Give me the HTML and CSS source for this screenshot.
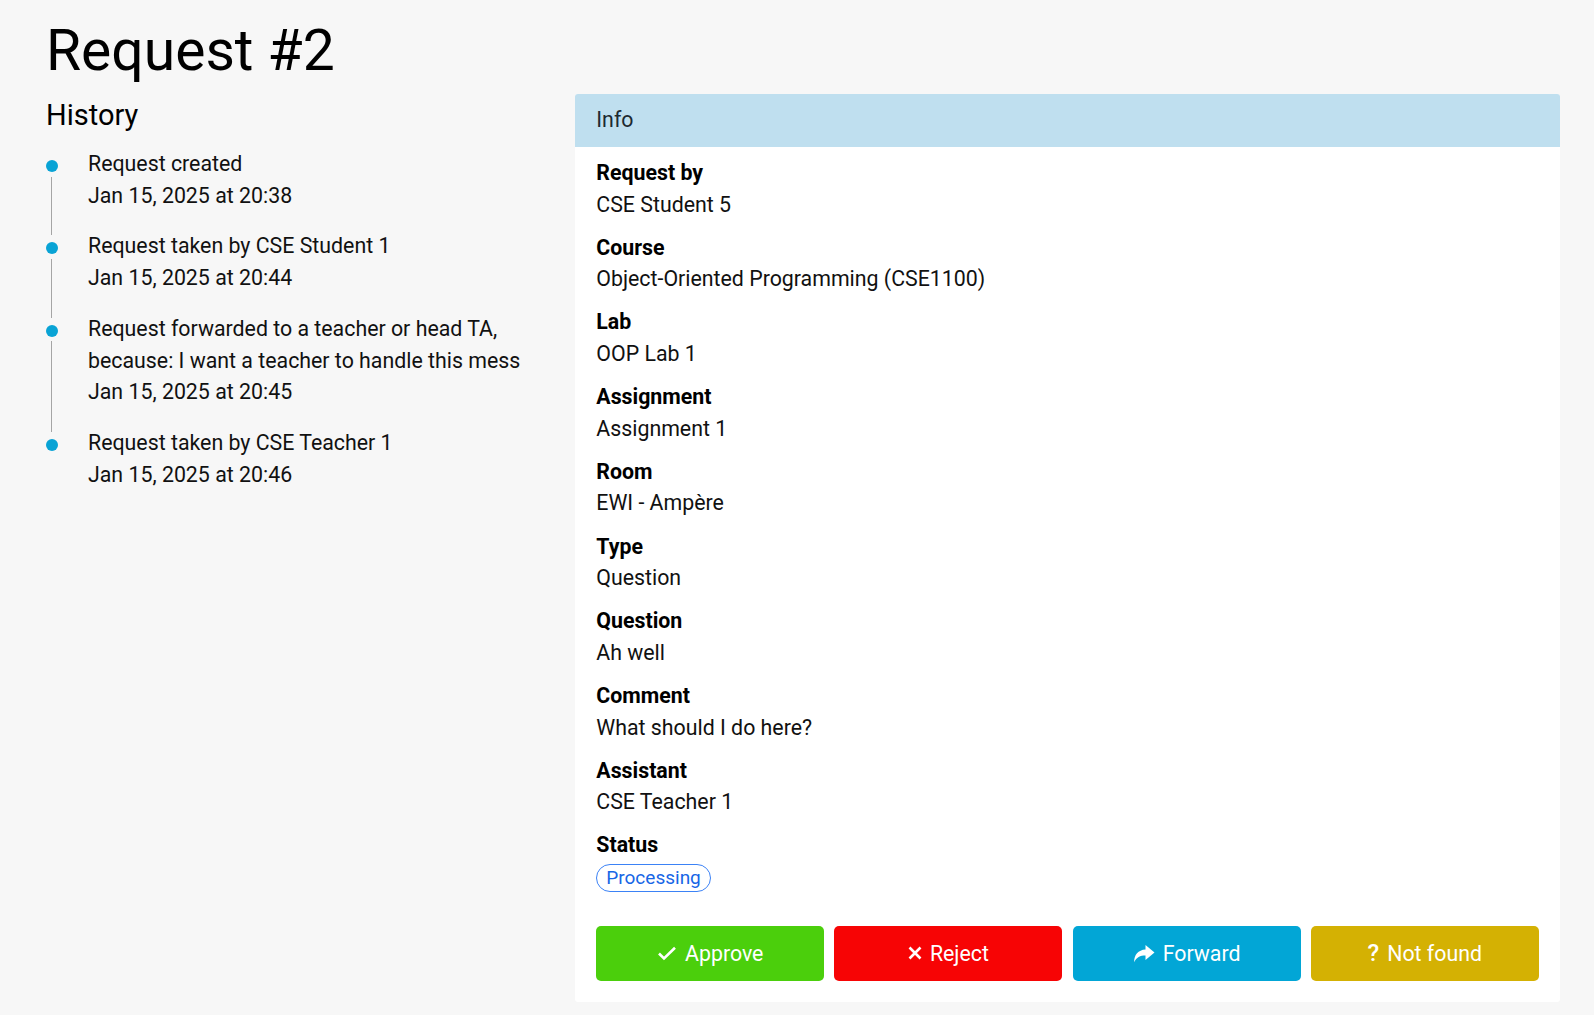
FILE: index.html
```html
<!DOCTYPE html>
<html lang="en">
<head>
  <meta charset="UTF-8">
  <meta name="viewport" content="width=device-width, initial-scale=1.0">
  <title>Request #2</title>
  <link rel="stylesheet" href="styles.css">
</head>
<body>

  <div class="page">
    <h1 class="page-title">Request #2</h1>

    <div class="layout">
      <!-- History timeline -->
      <div class="history">
        <h2 class="history-title">History</h2>
        <ul class="timeline">
          <li class="timeline-item">
            <div>Request created</div>
            <div>Jan 15, 2025 at 20:38</div>
          </li>
          <li class="timeline-item">
            <div>Request taken by CSE Student 1</div>
            <div>Jan 15, 2025 at 20:44</div>
          </li>
          <li class="timeline-item">
            <div>Request forwarded to a teacher or head TA,<br>because: I want a teacher to handle this mess</div>
            <div>Jan 15, 2025 at 20:45</div>
          </li>
          <li class="timeline-item">
            <div>Request taken by CSE Teacher 1</div>
            <div>Jan 15, 2025 at 20:46</div>
          </li>
        </ul>
      </div>

      <!-- Info card -->
      <div class="card">
        <div class="card-header">Info</div>
        <div class="card-body">
          <div class="field">
            <div class="field-label">Request by</div>
            <div class="field-value">CSE Student 5</div>
          </div>
          <div class="field">
            <div class="field-label">Course</div>
            <div class="field-value">Object-Oriented Programming (CSE1100)</div>
          </div>
          <div class="field">
            <div class="field-label">Lab</div>
            <div class="field-value">OOP Lab 1</div>
          </div>
          <div class="field">
            <div class="field-label">Assignment</div>
            <div class="field-value">Assignment 1</div>
          </div>
          <div class="field">
            <div class="field-label">Room</div>
            <div class="field-value">EWI - Ampère</div>
          </div>
          <div class="field">
            <div class="field-label">Type</div>
            <div class="field-value">Question</div>
          </div>
          <div class="field">
            <div class="field-label">Question</div>
            <div class="field-value">Ah well</div>
          </div>
          <div class="field">
            <div class="field-label">Comment</div>
            <div class="field-value">What should I do here?</div>
          </div>
          <div class="field">
            <div class="field-label">Assistant</div>
            <div class="field-value">CSE Teacher 1</div>
          </div>
          <div class="field">
            <div class="field-label">Status</div>
            <div class="field-value status-value"><span class="badge">Processing</span></div>
          </div>

          <div class="actions">
            <button class="btn btn-approve">
              <svg class="icon" width="20" height="15" viewBox="0 0 20 15"><polyline points="2,7.5 7,12.5 18,1.8" fill="none" stroke="#fff" stroke-width="2.6"/></svg>
              Approve
            </button>
            <button class="btn btn-reject">
              <svg class="icon" width="14" height="14" viewBox="0 0 14 14"><path d="M1.5 1.5 L12.5 12.5 M12.5 1.5 L1.5 12.5" stroke="#fff" stroke-width="2.6"/></svg>
              Reject
            </button>
            <button class="btn btn-forward">
              <svg class="icon" width="22" height="19" viewBox="0 0 22 19"><path d="M12.5 1 L21.5 8.5 L12.5 16 V11.6 C7 11.6 3.6 13.4 1.2 18.2 C1 11 5.2 6 12.5 5.6 Z" fill="#fff"/></svg>
              Forward
            </button>
            <button class="btn btn-notfound">
              <span class="icon-glyph">?</span>
              Not found
            </button>
          </div>
        </div>
      </div>
    </div>
  </div>

</body>
</html>
```

FILE: styles.css
```css
body {
  font-family: Roboto, "Liberation Sans", sans-serif;
  background-color: #f7f7f7;
  color: #111;
  margin: 0;
  font-size: 21.33px;
  line-height: 31.6px;
}

.page {
  padding: 17px 34px 0 46px;
}

.page-title {
  font-size: 57px;
  font-weight: 400;
  line-height: 68px;
  margin: 0 0 9px 0;
  color: #000;
}

.layout {
  display: flex;
  align-items: flex-start;
  gap: 20px;
}

.history {
  flex: 1;
}

.history-title {
  font-size: 29px;
  font-weight: 400;
  line-height: 35px;
  margin: 4px 0 15px 0;
  color: #000;
}

.timeline {
  list-style: none;
  margin: 0 0 0 -2px;
  padding: 0;
}

.timeline-item {
  position: relative;
  padding-left: 44px;
  margin-bottom: 19.3px;
}

.timeline-item::before {
  content: "";
  position: absolute;
  left: 2px;
  top: 12px;
  width: 12px;
  height: 12px;
  border-radius: 50%;
  background-color: #09a3d5;
}

.timeline-item::after {
  content: "";
  position: absolute;
  left: 7px;
  top: 28.5px;
  bottom: -24.3px;
  width: 1px;
  background-color: #a5a5a5;
}

.timeline-item:last-child::after {
  display: none;
}

.card {
  width: 985px;
  background-color: #ffffff;
  border-radius: 3px;
  overflow: hidden;
}

.card-header {
  background-color: #bfdfef;
  padding: 10px 21.3px 11px 21.3px;
  color: #1d2a31;
}

.card-body {
  padding: 10.5px 21.3px 21px 21.3px;
}

.field {
  margin-bottom: 11.5px;
}

.field-label {
  font-weight: 700;
  color: #000;
}

.status-value {
  height: 31.6px;
  padding-top: 3px;
  box-sizing: border-box;
}

.badge {
  display: inline-block;
  vertical-align: top;
  font-size: 19px;
  line-height: 26px;
  padding: 0 9px;
  border: 1px solid #3b82f6;
  border-radius: 14px;
  color: #1766e6;
}

.actions {
  display: flex;
  gap: 10.3px;
  margin-top: 33.5px;
}

.btn {
  flex: 1;
  height: 54.7px;
  border: none;
  border-radius: 5px;
  color: #ffffff;
  font-family: inherit;
  font-size: 21.33px;
  display: flex;
  align-items: center;
  justify-content: center;
  gap: 8px;
  cursor: pointer;
}

.btn-approve {
  background-color: #4bcf0c;
}

.btn-reject {
  background-color: #f70405;
}

.btn-forward {
  background-color: #02a6d6;
}

.btn-notfound {
  background-color: #d4b103;
}

.icon-glyph {
  font-weight: 500;
  font-size: 24px;
}
```
